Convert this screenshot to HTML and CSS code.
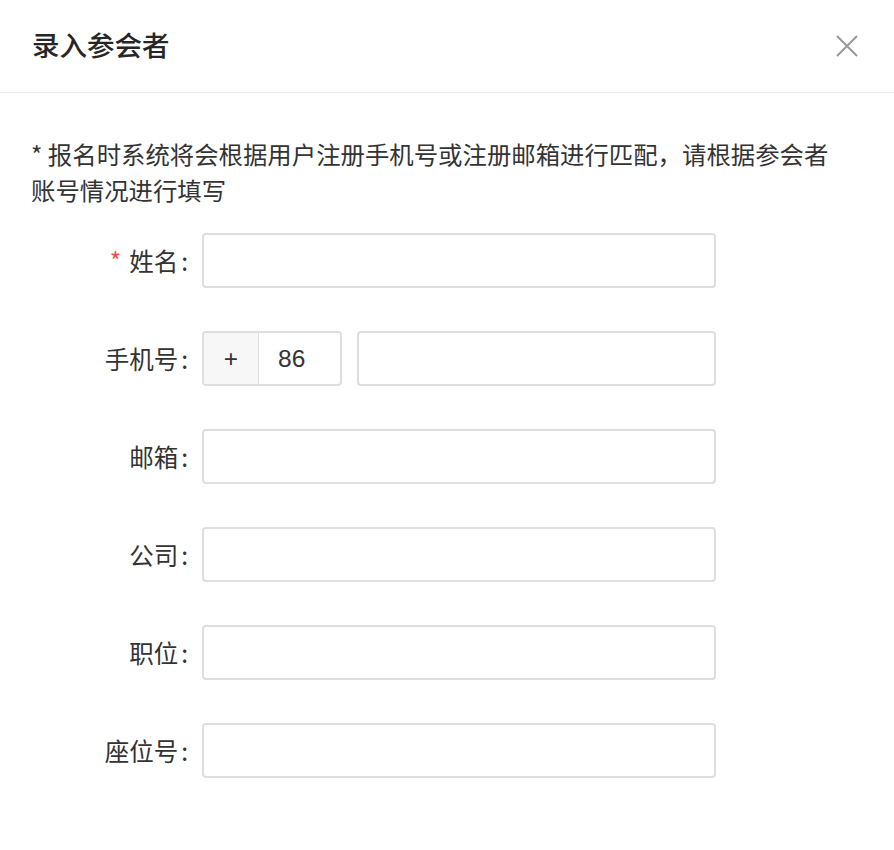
FILE: index.html
```html
<!DOCTYPE html>
<html lang="zh-CN">
<head>
<meta charset="utf-8">
<link rel="stylesheet" href="styles.css">
</head>
<body>
<div class="dialog">
  <header class="dialog-header">
    <h1 class="dialog-title">录入参会者</h1>
    <button class="close-btn" aria-label="关闭">
      <svg width="22" height="22" viewBox="0 0 22 22"><path d="M1 1 L21 21 M21 1 L1 21" stroke="#999" stroke-width="2" fill="none"/></svg>
    </button>
  </header>
  <div class="dialog-body">
    <p class="note">* 报名时系统将会根据用户注册手机号或注册邮箱进行匹配，请根据参会者账号情况进行填写</p>
    <form class="form">
      <div class="row">
        <label class="label"><span class="req">*</span>姓名<span class="colon">:</span></label>
        <input class="input" type="text">
      </div>
      <div class="row">
        <label class="label">手机号<span class="colon">:</span></label>
        <div class="phone">
          <div class="prefix"><span class="plus">+</span><span class="code">86</span></div>
          <input class="input phone-input" type="text">
        </div>
      </div>
      <div class="row">
        <label class="label">邮箱<span class="colon">:</span></label>
        <input class="input" type="text">
      </div>
      <div class="row">
        <label class="label">公司<span class="colon">:</span></label>
        <input class="input" type="text">
      </div>
      <div class="row">
        <label class="label">职位<span class="colon">:</span></label>
        <input class="input" type="text">
      </div>
      <div class="row">
        <label class="label">座位号<span class="colon">:</span></label>
        <input class="input" type="text">
      </div>
    </form>
  </div>
</div>
</body>
</html>
```

FILE: styles.css
```css
* { box-sizing: border-box; }
html, body {
  margin: 0;
  padding: 0;
  background: #fff;
}
body {
  font-family: "Noto Sans CJK SC", "Noto Sans", sans-serif;
  color: #333;
  width: 894px;
  height: 850px;
  overflow: hidden;
}
.dialog-header {
  height: 93px;
  border-bottom: 1px solid #ececec;
  display: flex;
  align-items: center;
  justify-content: space-between;
  padding: 0 36px 0 32px;
}
.dialog-title {
  margin: 0;
  font-size: 27.5px;
  font-weight: 500;
  color: #262626;
  line-height: 1;
  position: relative;
  top: -1px;
}
.close-btn {
  border: 0;
  background: none;
  padding: 0;
  width: 22px;
  height: 22px;
  display: flex;
}
.dialog-body {
  padding: 43px 31px 0 31px;
}
.note {
  margin: 0;
  font-size: 24.4px;
  line-height: 36px;
  color: #333;
  width: 810px;
}
.form {
  margin-top: 25px;
  display: flex;
  flex-direction: column;
  gap: 43px;
}
.row {
  display: flex;
  align-items: center;
  height: 55px;
}
.label {
  width: 171px;
  padding-right: 14px;
  text-align: right;
  font-size: 24.5px;
  color: #333;
}
.colon {
  margin-left: 3px;
}
.req {
  color: #f5514f;
  margin-right: 8px;
}
.input {
  width: 514px;
  height: 55px;
  border: 2px solid #dedede;
  border-radius: 4px;
  background: #fff;
  outline: none;
  font-size: 24px;
}
.phone {
  display: flex;
  gap: 15px;
}
.prefix {
  display: flex;
  width: 140px;
  height: 55px;
  border: 2px solid #dedede;
  border-radius: 4px;
  overflow: hidden;
  font-family: "Liberation Sans", "Noto Sans", sans-serif;
  font-size: 24.5px;
  color: #333;
}
.plus {
  width: 55px;
  background: #f7f7f7;
  border-right: 1px solid #dedede;
  display: flex;
  align-items: center;
  justify-content: center;
}
.code {
  flex: 1;
  display: flex;
  align-items: center;
  padding-left: 19px;
}
.phone-input {
  width: 359px;
}
```
